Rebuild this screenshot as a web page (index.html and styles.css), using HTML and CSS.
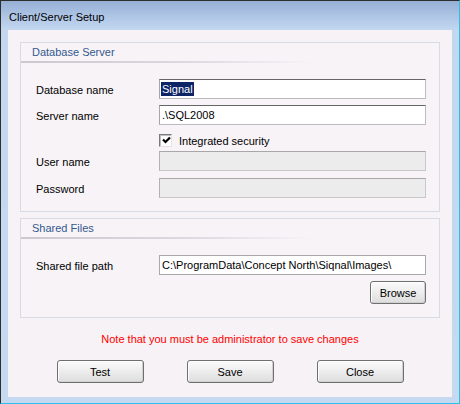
FILE: index.html
```html
<!DOCTYPE html>
<html>
<head>
<meta charset="utf-8">
<title>Client/Server Setup</title>
<link rel="stylesheet" href="styles.css">
</head>
<body>
<div class="window">
  <div class="titlebar">Client/Server Setup</div>
  <div class="client">
    <div class="group group-db">
      <div class="group-head">Database Server</div>
      <div class="group-body">
        <div class="row">
          <span class="label">Database name</span>
          <div class="field"><span class="sel">Signal</span></div>
        </div>
        <div class="row row-gap6">
          <span class="label">Server name</span>
          <div class="field">.\SQL2008</div>
        </div>
        <div class="check-row">
          <span class="checkbox">
            <svg width="9" height="9" viewBox="0 0 9 9"><path d="M1 3.5 L3.5 6 L8 1.5" fill="none" stroke="#000" stroke-width="2.2"/></svg>
          </span>
          <span class="check-label">Integrated security</span>
        </div>
        <div class="row row-gap4">
          <span class="label">User name</span>
          <div class="field disabled"></div>
        </div>
        <div class="row row-gap7">
          <span class="label">Password</span>
          <div class="field disabled"></div>
        </div>
      </div>
    </div>

    <div class="group group-files">
      <div class="group-head">Shared Files</div>
      <div class="group-body">
        <div class="row">
          <span class="label">Shared file path</span>
          <div class="field flat">C:\ProgramData\Concept North\Siqnal\Images\</div>
        </div>
        <div class="browse-row">
          <button class="btn btn-browse">Browse</button>
        </div>
      </div>
    </div>

    <p class="note">Note that you must be administrator to save changes</p>

    <div class="actions">
      <button class="btn btn-main">Test</button>
      <button class="btn btn-main">Save</button>
      <button class="btn btn-main">Close</button>
    </div>
  </div>
</div>
</body>
</html>
```

FILE: styles.css
```css
* { box-sizing: border-box; }

html, body {
  margin: 0;
  padding: 0;
  background: #c6daf2;
}

body {
  font-family: "Liberation Sans", Arial, sans-serif;
  font-size: 11px;
  color: #000;
}

.window {
  width: 460px;
  height: 404px;
  border-top: 1px solid #2e2e2e;
  border-left: 1px solid #2e2e2e;
  border-right: 1px solid #2bbfec;
  border-bottom: 1px solid #2bbfec;
  padding: 0 7px 6px 7px;
  background: linear-gradient(to bottom, #96afd4 0px, #afc6e6 16px, #c3d7f0 29px, #c5d9f1 100%);
  display: flex;
  flex-direction: column;
}

.titlebar {
  height: 29px;
  padding: 9px 0 0 1px;
  line-height: 14px;
  font-size: 11px;
  color: #000;
}

.client {
  height: 367px;
  background: #f6f2f6;
  padding: 12px 12px 0 12px;
}

.group {
  border: 1px solid #d5dbe7;
  background: #f7f3f7;
}

.group-files {
  margin-top: 6px;
}

.group-head {
  height: 20px;
  padding-left: 11px;
  line-height: 18px;
  color: #33598f;
  font-size: 11px;
  background:
    linear-gradient(to right, rgba(190, 184, 194, 0.75), rgba(190, 184, 194, 0.45) 40%, rgba(190, 184, 194, 0) 70%) left bottom / 100% 2px no-repeat;
}

.group-body {
  padding: 16px 13px 13px 15px;
}

.row {
  display: flex;
  align-items: center;
  height: 20px;
}

.row-gap6 { margin-top: 6px; }
.row-gap4 { margin-top: 4px; }
.row-gap7 { margin-top: 7px; }

.label {
  width: 123px;
  flex: none;
  padding-top: 1px;
}

.field {
  width: 267px;
  height: 20px;
  background: #fff;
  border: 1px solid;
  border-color: #666666 #bcbcbc #bcbcbc #a6a6a6;
  padding: 0 0 0 2px;
  line-height: 18px;
  white-space: nowrap;
  overflow: hidden;
}

.field.flat {
  border-color: #a9a9a9;
}

.field.disabled {
  background: #ececec;
  border-color: #a8a8a8 #c8c8c8 #c8c8c8 #b2b2b2;
}

.sel {
  background: #0d2466;
  color: #fff;
  margin-left: -1px;
  padding: 1px 1px 1px 1px;
}

.check-row {
  display: flex;
  align-items: center;
  margin-top: 9px;
  margin-left: 123px;
  height: 13px;
}

.checkbox {
  width: 13px;
  height: 13px;
  flex: none;
  border: 1px solid;
  border-color: #7a7a7a #e2e2e2 #e2e2e2 #7a7a7a;
  background: #fff;
  box-shadow: inset 1px 1px 0 #c0c0c0;
  display: flex;
  align-items: center;
  justify-content: center;
  padding: 0 0 1px 1px;
}

.checkbox svg { display: block; }

.check-label {
  margin-left: 7px;
}

.browse-row {
  display: flex;
  justify-content: flex-end;
  margin-top: 6px;
}

.btn {
  font-family: "Liberation Sans", Arial, sans-serif;
  font-size: 11px;
  color: #000;
  height: 23px;
  border: 1px solid #6f6f6f;
  border-radius: 3px;
  background: linear-gradient(to bottom, #fbfbfb 0%, #eeeeee 45%, #dddddd 100%);
  box-shadow: inset 1px 1px 0 #ffffff, inset -1px -1px 0 #d0d0d0;
  padding: 0;
  margin: 0;
  line-height: 20px;
  text-align: center;
}

.btn-browse {
  width: 56px;
}

.note {
  margin: 14px 0 0 0;
  height: 14px;
  line-height: 14px;
  text-align: center;
  color: #ff0000;
}

.actions {
  display: flex;
  justify-content: center;
  gap: 43px;
  margin-top: 14px;
}

.btn-main {
  width: 87px;
}
```
